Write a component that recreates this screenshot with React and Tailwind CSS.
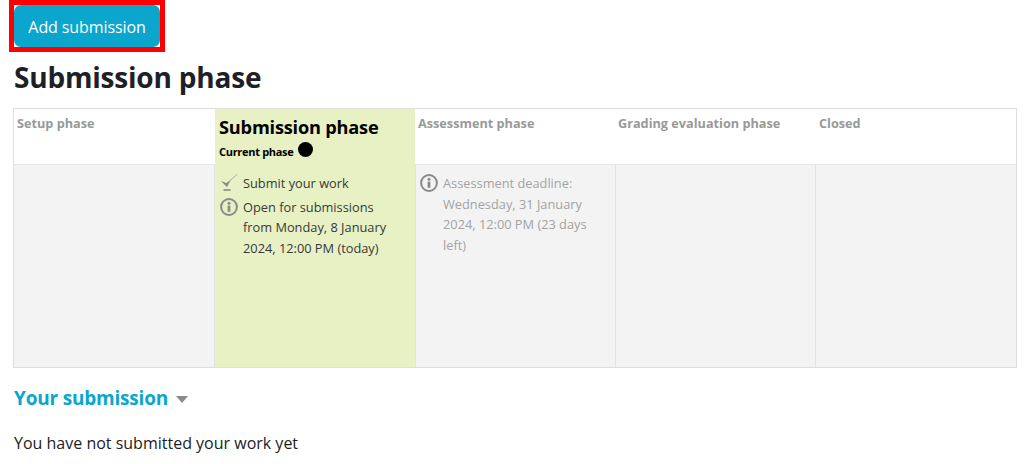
import React from 'react';

const phases = [
  { title: 'Setup phase', divider: 'border-r border-[#e3e3e3]' },
  {
    title: 'Submission phase',
    active: true,
    divider: '',
    items: [
      { icon: 'check', text: 'Submit your work' },
      { icon: 'info', text: 'Open for submissions from Monday, 8 January 2024, 12:00 PM (today)' },
    ],
  },
  {
    title: 'Assessment phase',
    divider: 'border-l border-[#e3e3e3]',
    items: [{ icon: 'info', text: 'Assessment deadline: Wednesday, 31 January 2024, 12:00 PM (23 days left)' }],
  },
  { title: 'Grading evaluation phase', divider: 'border-l border-[#e3e3e3]' },
  { title: 'Closed', divider: 'border-l border-[#e3e3e3]', last: true },
];

function InfoIcon() {
  return (
    <svg width="18" height="18" viewBox="0 0 18 18" fill="none" className="shrink-0">
      <circle cx="9" cy="9" r="7.9" stroke="#8a8a8a" strokeWidth="2" />
      <circle cx="9" cy="5.2" r="1.5" fill="#8a8a8a" />
      <rect x="7.6" y="7.6" width="2.8" height="6.2" fill="#8a8a8a" />
    </svg>
  );
}

function CheckIcon() {
  return (
    <svg width="18" height="18" viewBox="0 0 18 18" fill="none" className="shrink-0">
      <path d="M1 7 L6.5 9 L11 5.5 L7 13 Z" fill="#8a8a8a" />
      <path d="M10 6.5 L17.5 0" stroke="#b0b0b0" strokeWidth="1" />
      <path d="M3.5 16 H10.5" stroke="#8a8a8a" strokeWidth="1.6" />
    </svg>
  );
}

function PhaseHeader({ phase }) {
  if (phase.active) {
    return (
      <div className="h-[55px] bg-[#e7f1c3] pl-[4px] pt-[6px] text-black">
        <div className="text-[18.2px] leading-[24px] font-bold tracking-[-0.2px]">{phase.title}</div>
        <div className="flex items-center gap-[4px] mt-[5px] text-[11px] leading-[16px] font-bold tracking-[-0.3px]">
          Current phase
          <span className="w-[15px] h-[15px] rounded-full bg-black -mt-[6px]"></span>
        </div>
      </div>
    );
  }
  return (
    <div className={`h-[55px] bg-white pt-[5px] text-[12.7px] leading-[18px] font-bold text-[#999] ${phase.last ? 'pl-[4px]' : 'pl-[3px]'}`}>
      {phase.title}
    </div>
  );
}

function PhaseBody({ phase }) {
  const tone = phase.active ? 'bg-[#e7f1c3] text-[#373a3c] pl-[5px]' : 'bg-[#f3f3f3] text-[#a3a3a3] pl-[4px]';
  return (
    <div className={`h-[202px] pr-[20px] pt-[8px] ${tone} ${phase.divider}`}>
      {(phase.items || []).map((item) => (
        <div key={item.text} className="flex items-start gap-[5px] text-[12.8px] leading-[20.5px] mb-[3px]">
          <span className="mt-[1px]">{item.icon === 'info' ? <InfoIcon /> : <CheckIcon />}</span>
          <span>{item.text}</span>
        </div>
      ))}
    </div>
  );
}

export default function App() {
  return (
    <div className="w-[1024px] h-[464px] overflow-hidden bg-white text-[#1d2125] font-['Open_Sans',sans-serif]">
      <div className="pl-[9px] pr-[7px]">
        <div className="w-[156px] h-[52px] border-[5px] border-[#fe0000] bg-white">
          <button className="w-full h-full pt-[1px] bg-[#0aa6ce] text-white text-[16px] tracking-[-0.1px] rounded-[7px]">
            Add submission
          </button>
        </div>
        <div className="pl-[5px] mt-[8px] text-[28px] leading-[34px] font-bold tracking-[-0.2px]">Submission phase</div>
        <div className="ml-[4px] mt-[14px] w-[1004px] border border-[#dedede]">
          <div className="grid grid-cols-[201px_200px_200px_200px_201px]">
            {phases.map((p) => (
              <div key={p.title}>
                <PhaseHeader phase={p} />
                <div className={`h-[1px] ${p.active ? 'bg-[#e7f1c3]' : 'bg-[#e6e6e6]'}`}></div>
                <PhaseBody phase={p} />
              </div>
            ))}
          </div>
        </div>
        <div className="pl-[5px] mt-[17px] flex items-center gap-[8px]">
          <span className="text-[#0aa6ce] text-[19px] leading-[26px] font-bold tracking-[-0.2px]">Your submission</span>
          <span className="w-0 h-0 mt-[3px] border-l-[6.5px] border-r-[6.5px] border-t-[7px] border-l-transparent border-r-transparent border-t-[#8a8a8a]"></span>
        </div>
        <p className="pl-[5px] mt-[21px] text-[16px] leading-[22px]">You have not submitted your work yet</p>
      </div>
    </div>
  );
}
